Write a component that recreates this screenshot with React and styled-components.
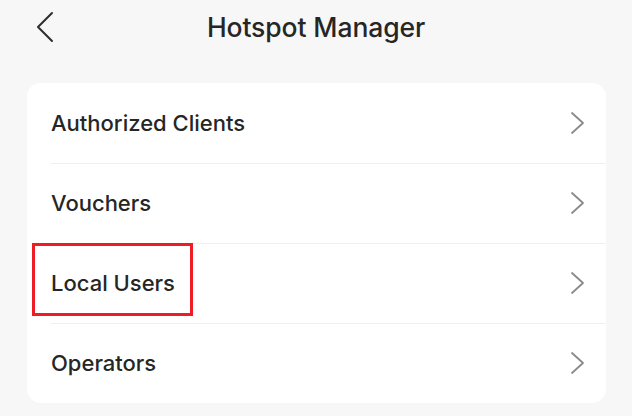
import React from "react";
import styled, { createGlobalStyle } from "styled-components";

const Global = createGlobalStyle`
  html, body { margin: 0; padding: 0; background: #f7f7f7; }
  body { font-family: Inter, "Noto Sans", sans-serif; color: #262626; }
`;

const Page = styled.div`
  width: 632px;
  height: 416px;
  background: #f7f7f7;
  display: flex;
  flex-direction: column;
  overflow: hidden;
`;

const Header = styled.header`
  height: 54px;
  display: grid;
  grid-template-columns: 60px 1fr 60px;
  align-items: center;
`;

const BackButton = styled.button`
  border: none;
  background: none;
  padding: 0 0 0 36px;
  display: flex;
  align-items: center;
  height: 100%;
  cursor: pointer;
`;

const Title = styled.h1`
  margin: 0;
  text-align: center;
  font-size: 26.5px;
  font-weight: 500;
  color: #262626;
  letter-spacing: -0.1px;
`;

const Card = styled.ul`
  list-style: none;
  margin: 29px 26px 0 27px;
  padding: 0;
  background: #fff;
  border-radius: 14px;
`;

const Row = styled.li`
  position: relative;
  height: 80px;
  display: flex;
  align-items: center;
  justify-content: space-between;
  padding: 0 20px 0 24px;
  & + &::before {
    content: "";
    position: absolute;
    top: 0;
    left: 24px;
    right: 0;
    height: 1px;
    background: #f0f0f0;
  }
`;

const Label = styled.span`
  font-size: 22px;
  font-weight: 500;
  color: #262626;
`;

const Highlight = styled.span`
  position: absolute;
  left: 5px;
  top: 0;
  width: 161px;
  height: 73px;
  box-sizing: border-box;
  border: 3px solid #ee1c25;
  z-index: 1;
`;

const Chevron = () => (
  <svg width="16" height="24" viewBox="0 0 16 24" fill="none">
    <path d="M2 2 L13 12 L2 22" stroke="#8a8a8a" strokeWidth="1.8" strokeLinecap="round" strokeLinejoin="round" />
  </svg>
);

const items = ["Authorized Clients", "Vouchers", "Local Users", "Operators"];

export default function App() {
  return (
    <Page>
      <Global />
      <Header>
        <BackButton aria-label="Back">
          <svg width="18" height="32" viewBox="0 0 18 32" fill="none">
            <path d="M16 2 L2 16 L16 30" stroke="#2e2e2e" strokeWidth="2" strokeLinecap="round" strokeLinejoin="round" />
          </svg>
        </BackButton>
        <Title>Hotspot Manager</Title>
        <span />
      </Header>
      <Card>
        {items.map((t) => (
          <Row key={t}>
            {t === "Local Users" && <Highlight />}
            <Label>{t}</Label>
            <Chevron />
          </Row>
        ))}
      </Card>
    </Page>
  );
}
